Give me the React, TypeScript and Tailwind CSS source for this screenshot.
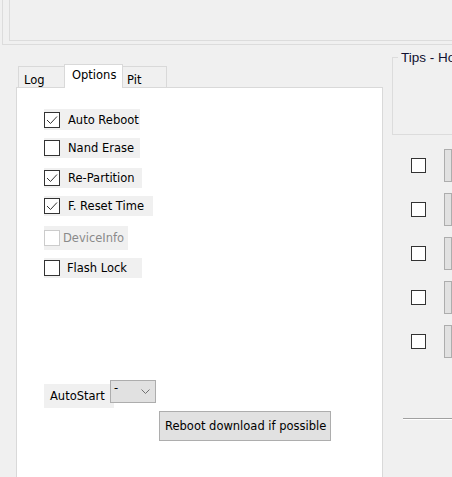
import React from 'react';

const FONT = { fontFamily: '"DejaVu Sans", Verdana, sans-serif' };

function Box({ checked, disabled, size = 16 }: { checked?: boolean; disabled?: boolean; size?: number }) {
  return (
    <span
      className={`flex shrink-0 items-center justify-center border bg-white ${
        disabled ? 'border-[#cccccc]' : 'border-[#333333]'
      }`}
      style={{ width: size, height: size }}
    >
      {checked && (
        <svg width="12" height="10" viewBox="0 0 12 10" fill="none">
          <path d="M1 5 L4.5 8.5 L11 1.5" stroke="#333" strokeWidth="1" />
        </svg>
      )}
    </span>
  );
}

const options = [
  { label: 'Auto Reboot', checked: true, w: 'w-[96px]', h: 'h-[21px]', mt: 'mt-0' },
  { label: 'Nand Erase', checked: false, w: 'w-[96px]', h: 'h-[20px]', mt: 'mt-[8px]' },
  { label: 'Re-Partition', checked: true, w: 'w-[98px]', h: 'h-[20px]', mt: 'mt-[10px]' },
  { label: 'F. Reset Time', checked: true, w: 'w-[109px]', h: 'h-[20px]', mt: 'mt-[8px]' },
];

export default function App() {
  return (
    <div className="relative h-[477px] w-[452px] overflow-hidden bg-[#f0f0f0] text-[11.5px] text-black" style={FONT}>
      {/* top group */}
      <div className="ml-[2px] h-[45px] border-b border-l border-[#dcdcdc]">
        <div className="ml-[6px] h-[41px] border-b border-l border-[#dcdcdc]" />
      </div>

      <div className="flex">
        {/* tab control */}
        <div className="w-[383px] shrink-0 pl-[16px] pt-[19px]">
          <div className="flex h-[23px] items-end whitespace-nowrap">
            <div className="ml-[2px] h-[21px] w-[46px] border-l border-t border-[#d9d9d9] pl-[5px] leading-[26px]">Log</div>
            <div className="relative z-10 -mb-px h-[24px] w-[59px] border-l border-r border-t border-[#d9d9d9] bg-white pl-[7px] leading-[21px]">
              Options
            </div>
            <div className="h-[21px] w-[44px] border-r border-t border-[#d9d9d9] pl-[4px] leading-[26px]">Pit</div>
          </div>
          <div className="h-[400px] border border-[#d9d9d9] bg-white pl-[27px] pt-[21px]">
            <div className="flex flex-col items-start whitespace-nowrap">
              {options.map((o) => (
                <label key={o.label} className={`flex items-center bg-[#f0f0f0] ${o.w} ${o.h} ${o.mt}`}>
                  <Box checked={o.checked} />
                  <span className="ml-[8px] pt-[2px]">{o.label}</span>
                </label>
              ))}
              <label className="mt-[10px] flex h-[24px] w-[84px] items-center bg-[#f0f0f0]">
                <Box disabled />
                <span className="ml-[3px] pt-[2px] text-[#8a8a8a]">DeviceInfo</span>
              </label>
              <label className="mt-[8px] flex h-[20px] w-[98px] items-center bg-[#f0f0f0]">
                <Box />
                <span className="ml-[7px] pt-[2px]">Flash Lock</span>
              </label>

              <div className="mt-[102px] flex items-start">
                <div className="mt-[4px] flex h-[24px] w-[70px] items-center bg-[#f0f0f0] pl-[6px] pt-[2px]">AutoStart</div>
                <div className="-ml-[4px] flex h-[23px] w-[46px] items-center justify-between border border-[#adadad] bg-[#e1e1e1] pl-[3px] pr-[5px]">
                  <span className="-mt-[5px]">-</span>
                  <svg width="9" height="5" viewBox="0 0 9 5" fill="none">
                    <path d="M0.5 0.5 L4.5 4.5 L8.5 0.5" stroke="#707070" strokeWidth="1" />
                  </svg>
                </div>
              </div>
              <button className="ml-[115px] mt-[3px] h-[30px] w-[172px] border border-[#adadad] bg-[#e1e1e1] pl-[5px] pt-[2px] text-left">
                Reboot download if possible
              </button>
            </div>
          </div>
        </div>

        {/* right column */}
        <div className="flex-1 overflow-hidden pl-[9px]">
          <div className="relative mt-[12px] h-[78px] border-b border-l border-t border-[#dcdcdc]">
            <span
              className="absolute -top-[9px] left-[5px] whitespace-nowrap bg-[#f0f0f0] px-[3px] text-[13.5px] leading-[18px] text-[#101030]"
              style={{ fontFamily: '"Liberation Sans", Arial, sans-serif' }}
            >
              Tips - Ho
            </span>
          </div>
          <div className="mt-[14px] flex flex-col gap-[11px]">
            {[0, 1, 2, 3, 4].map((i) => (
              <div key={i} className="flex h-[33px] items-center">
                <span className="ml-[19px]">
                  <Box size={15} />
                </span>
                <div className="ml-[18px] h-[33px] w-[30px] border border-[#adadad] bg-[#e1e1e1]" />
              </div>
            ))}
          </div>
          <div className="ml-[11px] mt-[60px] h-[2px] border-b border-t border-b-white border-t-[#a0a0a0]" />
        </div>
      </div>
    </div>
  );
}
